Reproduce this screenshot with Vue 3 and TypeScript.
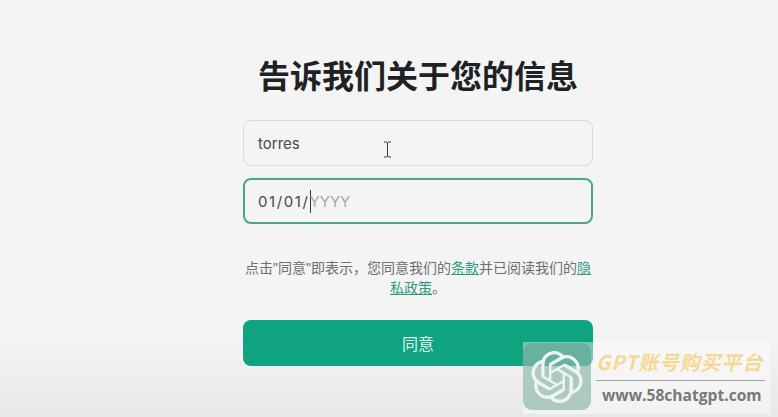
<template>
  <div class="signup-page">
    <div class="signup-form">
      <h1 class="title">告诉我们关于您的信息</h1>
      <div class="field">
        <span>{{ fullName }}</span>
      </div>
      <div class="field field-focus">
        <span class="date">{{ birthday }}</span><span class="caret"></span><span class="placeholder">{{ birthdayHint }}</span>
      </div>
      <p class="terms">
        点击"同意"即表示，您同意我们的<a href="#">条款</a>并已阅读我们的<a href="#">隐私政策</a>。
      </p>
      <button class="agree" type="button">同意</button>
    </div>

    <svg class="mouse" width="9" height="17" viewBox="0 0 9 17">
      <path d="M1 1h2.5l1 1 1-1H8M4.5 2v13M1 16h2.5l1-1 1 1H8" fill="none" stroke="#3a3a3a" stroke-width="1" />
    </svg>

    <div class="watermark">
      <div class="wm-logo">
        <svg width="52" height="52" viewBox="0 0 24 24">
          <path :d="logoPath" fill="#eef4f2" />
        </svg>
      </div>
      <div class="wm-text">
        <div class="wm-title">GPT账号购买平台</div>
        <div class="wm-url">www.58chatgpt.com</div>
      </div>
    </div>
  </div>
</template>

<script setup lang="ts">
const fullName = 'torres'
const birthday = '01/01/'
const birthdayHint = 'YYYY'

const logoPath =
  'M22.2819 9.8211a5.9847 5.9847 0 0 0-.5157-4.9108 6.0462 6.0462 0 0 0-6.5098-2.9A6.0651 6.0651 0 0 0 4.9807 4.1818a5.9847 5.9847 0 0 0-3.9977 2.9 6.0462 6.0462 0 0 0 .7427 7.0966 5.98 5.98 0 0 0 .511 4.9107 6.051 6.051 0 0 0 6.5146 2.9001A5.9847 5.9847 0 0 0 13.2599 24a6.0557 6.0557 0 0 0 5.7718-4.2058 5.9894 5.9894 0 0 0 3.9977-2.9001 6.0557 6.0557 0 0 0-.7475-7.0729zm-9.022 12.6081a4.4755 4.4755 0 0 1-2.8764-1.0408l.1419-.0804 4.7783-2.7582a.7948.7948 0 0 0 .3927-.6813v-6.7369l2.02 1.1686a.071.071 0 0 1 .038.052v5.5826a4.504 4.504 0 0 1-4.4945 4.4944zm-9.6607-4.1254a4.4708 4.4708 0 0 1-.5346-3.0137l.142.0852 4.783 2.7582a.7712.7712 0 0 0 .7806 0l5.8428-3.3685v2.3324a.0804.0804 0 0 1-.0332.0615L9.74 19.9502a4.4992 4.4992 0 0 1-6.1408-1.6464zM2.3408 7.8956a4.485 4.485 0 0 1 2.3655-1.9728V11.6a.7664.7664 0 0 0 .3879.6765l5.8144 3.3543-2.0201 1.1685a.0757.0757 0 0 1-.071 0l-4.8303-2.7865A4.504 4.504 0 0 1 2.3408 7.872zm16.5963 3.8558L13.1038 8.364 15.1192 7.2a.0757.0757 0 0 1 .071 0l4.8303 2.7913a4.4944 4.4944 0 0 1-.6765 8.1042v-5.6772a.79.79 0 0 0-.407-.667zm2.0107-3.0231l-.142-.0852-4.7735-2.7818a.7759.7759 0 0 0-.7854 0L9.409 9.2297V6.8974a.0662.0662 0 0 1 .0284-.0615l4.8303-2.7866a4.4992 4.4992 0 0 1 6.6802 4.66zM8.3065 12.863l-2.02-1.1638a.0804.0804 0 0 1-.038-.0567V6.0742a4.4992 4.4992 0 0 1 7.3757-3.4537l-.142.0805L8.704 5.459a.7948.7948 0 0 0-.3927.6813zm1.0976-2.3654l2.602-1.4998 2.6069 1.4998v2.9994l-2.5974 1.4997-2.6067-1.4997Z'
</script>

<style>
html,
body {
  margin: 0;
  overflow: hidden;
}
</style>

<style scoped>
.signup-page {
  position: relative;
  width: 778px;
  height: 417px;
  overflow: hidden;
  background: linear-gradient(#f4f4f4 0, #f4f4f4 335px, #e8e8e8 417px);
  font-family: Inter, "Noto Sans CJK SC", sans-serif;
}

.signup-form {
  width: 350px;
  margin-left: 243px;
  padding-top: 50px;
  display: flex;
  flex-direction: column;
}

.title {
  margin: 0 0 21px;
  height: 49px;
  line-height: 49px;
  font-size: 32px;
  font-weight: 700;
  color: #202123;
  text-align: center;
  white-space: nowrap;
  font-family: "Noto Sans CJK SC", sans-serif;
}

.field {
  box-sizing: border-box;
  height: 46px;
  margin-bottom: 12px;
  padding: 0 14px;
  display: flex;
  align-items: center;
  border: 1px solid #d9d9de;
  border-radius: 8px;
  font-size: 15px;
  color: #48484c;
}

.field-focus {
  border: 2px solid #4fa48e;
  padding: 0 13px;
  box-shadow: 0 0 0 1px #e6f4f0;
}

.date {
  letter-spacing: 1.6px;
}

.caret {
  width: 1px;
  height: 23px;
  margin-right: -1px;
  background: #333;
}

.placeholder {
  color: #a9a9ac;
}

.terms {
  margin: 22px 0 22px;
  font-size: 14px;
  line-height: 20px;
  color: #6e6e73;
  text-align: center;
  font-family: "Liberation Sans", "Noto Sans CJK SC", sans-serif;
}

.terms a {
  color: #2f9c80;
}

.agree {
  height: 46px;
  border: 0;
  border-radius: 8px;
  background: #10a37f;
  color: #d9f5ea;
  font-size: 16px;
  font-family: "Noto Sans CJK SC", sans-serif;
}

.mouse {
  position: absolute;
  left: 383px;
  top: 141px;
}

.watermark {
  position: absolute;
  left: 523px;
  top: 342px;
  width: 247px;
  height: 71px;
  display: flex;
  align-items: flex-start;
  padding-top: 1px;
  background: rgba(255, 255, 255, 0.42);
}

.wm-logo {
  width: 68px;
  height: 67px;
  border-radius: 9px;
  display: flex;
  align-items: center;
  justify-content: center;
  background: rgba(86, 150, 132, 0.45);
}

.wm-text {
  margin-left: 5px;
  width: 169px;
}

.wm-title {
  height: 37px;
  line-height: 38px;
  border-bottom: 1px solid #a5a5a5;
  font-size: 20px;
  font-weight: 700;
  font-style: italic;
  letter-spacing: 0.8px;
  color: #f5d893;
  white-space: nowrap;
  font-family: "Noto Sans CJK SC", sans-serif;
}

.wm-url {
  padding-left: 6px;
  line-height: 28px;
  font-size: 15.6px;
  font-weight: 700;
  color: #77787a;
  white-space: nowrap;
  font-family: "Open Sans", sans-serif;
}
</style>
